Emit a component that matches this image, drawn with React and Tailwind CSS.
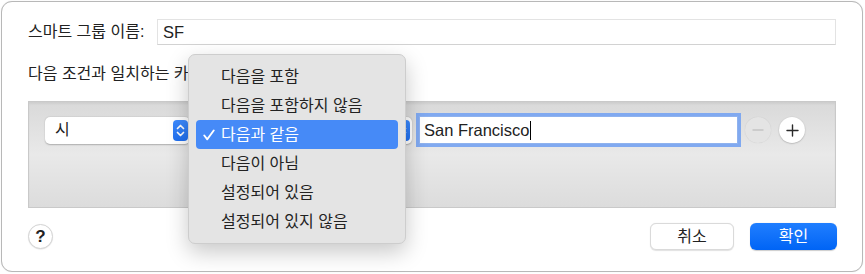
import React from "react";

const FONT = { fontFamily: '"Liberation Sans", "Noto Sans CJK KR", sans-serif' };

function Stepper() {
  return (
    <div className="flex h-[21px] w-[15px] flex-none items-center justify-center rounded-[4px] bg-gradient-to-b from-[#3d8bff] to-[#1f6ff0]">
      <svg width="9" height="15" viewBox="0 0 9 15" fill="none" stroke="white" strokeWidth="1.7" strokeLinecap="round" strokeLinejoin="round">
        <path d="M1.5 5.5 L4.5 2.5 L7.5 5.5" />
        <path d="M1.5 9.5 L4.5 12.5 L7.5 9.5" />
      </svg>
    </div>
  );
}

function Popup({ label, width }) {
  return (
    <div
      className="flex h-[27px] flex-none items-center justify-between rounded-[5px] bg-white pl-[10px] pr-[2px] shadow-[0_0.5px_1.5px_rgba(0,0,0,0.25)]"
      style={{ width }}
    >
      <span className="text-[16px] text-[#222]">{label}</span>
      <Stepper />
    </div>
  );
}

const ITEMS = [
  "다음을 포함",
  "다음을 포함하지 않음",
  "다음과 같음",
  "다음이 아님",
  "설정되어 있음",
  "설정되어 있지 않음",
];

export default function App() {
  return (
    <div className="relative h-[274px] w-[865px] bg-white text-[#222]" style={FONT}>
      <div className="ml-[1px] mt-[1px] h-[271px] w-[862px] rounded-[11px] border border-[#b8b8b8] bg-white shadow-[0_0_1px_rgba(0,0,0,0.15)]">
        <div className="flex flex-col pl-[26px]">
          {/* Name row */}
          <div className="mt-[17px] flex h-[26px] items-center">
            <div className="w-[129px] flex-none text-[16px]">스마트 그룹 이름:</div>
            <div className="flex h-[26px] w-[679px] items-center border border-[#e3e3e3] border-b-[#d2d2d2] bg-white pl-[5px] text-[16.5px]">
              SF
            </div>
          </div>

          {/* Condition label (partly hidden under the open menu) */}
          <div className="mt-[19px] flex h-[20px] items-center text-[16px]">다음 조건과 일치하는 카드 포함:</div>

          {/* Rules panel */}
          <div className="mt-[17px] h-[107px] w-[808px] border border-[#c9c9c9] bg-gradient-to-b from-[#d9d9d9] via-[#e9e9e9] to-[#dcdcdc] shadow-[inset_0_2px_2px_rgba(0,0,0,0.05)]">
            <div className="ml-[16px] mt-[14px] flex h-[28px] items-center">
              <Popup label="시" width="145px" />
              <div className="ml-[6px]">
                <Popup label="" width="216px" />
              </div>
              <div className="ml-[7px] flex h-[28px] w-[319px] items-center border border-[#8fb2ee] bg-white pl-[4px] text-[16.5px] shadow-[0_0_0_3px_#80a9f0]">
                <span>San Francisco</span>
                <span className="ml-[1px] inline-block h-[19px] w-[1px] bg-black" />
              </div>
              <div className="ml-[7px] flex h-[26px] w-[26px] items-center justify-center rounded-full bg-[#e4e4e4] shadow-[0_0_1px_rgba(0,0,0,0.15)]">
                <svg width="12" height="12" viewBox="0 0 12 12">
                  <path d="M1 6 H11" stroke="#c3c3c3" strokeWidth="1.4" strokeLinecap="round" />
                </svg>
              </div>
              <div className="ml-[8px] flex h-[26px] w-[26px] items-center justify-center rounded-full bg-white shadow-[0_0.5px_1.5px_rgba(0,0,0,0.3)]">
                <svg width="13" height="13" viewBox="0 0 13 13">
                  <path d="M1 6.5 H12 M6.5 1 V12" stroke="#2a2a2a" strokeWidth="1.4" strokeLinecap="round" />
                </svg>
              </div>
            </div>
          </div>

          {/* Bottom row */}
          <div className="mt-[15px] flex h-[27px] w-[809px] items-center justify-between">
            <div className="flex h-[25px] w-[25px] items-center justify-center rounded-full border border-[#d4d4d4] bg-white text-[17px] font-bold text-[#222] shadow-[0_0.5px_1px_rgba(0,0,0,0.12)]">
              ?
            </div>
            <div className="flex gap-[16px]">
              <div className="flex h-[27px] w-[84px] items-center justify-center rounded-[6px] border border-[#dadada] bg-white text-[16px] shadow-[0_0.5px_1px_rgba(0,0,0,0.12)]">
                취소
              </div>
              <div className="flex h-[27px] w-[87px] items-center justify-center rounded-[6px] bg-gradient-to-b from-[#1f7eff] to-[#0064f5] text-[16px] text-white shadow-[0_0.5px_1px_rgba(0,0,0,0.2)]">
                확인
              </div>
            </div>
          </div>
        </div>
      </div>

      {/* Dropdown menu */}
      <div className="absolute left-[188px] top-[53px] w-[218px] rounded-[7px] border border-[#cdcdcd] bg-[#e4e4e4] px-[7px] pb-[7px] pt-[7px] shadow-[0_8px_22px_rgba(0,0,0,0.22)]">
        {ITEMS.map((t, i) => {
          const sel = i === 2;
          return (
            <div
              key={t}
              className={
                sel
                  ? "flex h-[29px] items-center rounded-[4px] bg-[#468af7] text-white"
                  : "flex h-[29px] items-center text-[#222]"
              }
            >
              <div className="flex w-[25px] flex-none justify-start pl-[7px]">
                {sel && (
                  <svg width="12" height="12" viewBox="0 0 12 12" fill="none" stroke="white" strokeWidth="1.9" strokeLinecap="round" strokeLinejoin="round">
                    <path d="M1.3 6.5 L4.3 10.3 L10.7 1.5" />
                  </svg>
                )}
              </div>
              <span className="text-[16px]">{t}</span>
            </div>
          );
        })}
      </div>
    </div>
  );
}
